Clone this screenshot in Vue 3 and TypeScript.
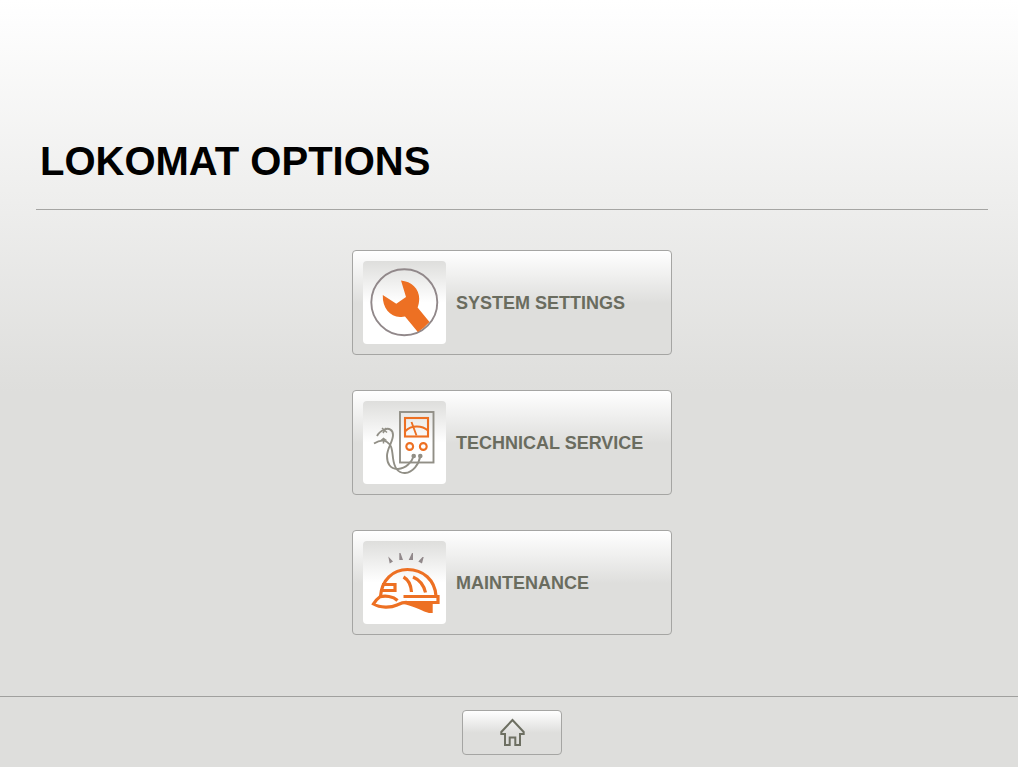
<script setup lang="ts">
interface Option {
  id: 'settings' | 'service' | 'maintenance'
  label: string
}

const options: Option[] = [
  { id: 'settings', label: 'SYSTEM SETTINGS' },
  { id: 'service', label: 'TECHNICAL SERVICE' },
  { id: 'maintenance', label: 'MAINTENANCE' },
]
</script>

<template>
  <div class="page">
    <header class="header">
      <h1 class="title">LOKOMAT OPTIONS</h1>
    </header>

    <main class="options">
      <button v-for="option in options" :key="option.id" type="button" class="option">
        <span class="tile">
          <svg v-if="option.id === 'settings'" viewBox="0 0 83 83" fill="none" aria-hidden="true">
            <circle cx="41.3" cy="41.3" r="33" stroke="#91888a" stroke-width="1.9" />
            <path
              d="M38 19.6C48.5 20.5 56.2 28 56.2 37.5C56.2 41 55.6 44 54.6 46.6L66.5 61Q61 67.2 54.8 71L42 55.6Q39.6 56.2 37 56C27 55.5 19.2 47 19.8 34L33.3 42.8L43 36Z"
              fill="#ed7023"
            />
          </svg>

          <svg v-else-if="option.id === 'service'" viewBox="0 0 83 83" fill="none" aria-hidden="true">
            <g stroke="#918f86" stroke-width="1.9">
              <rect x="37" y="11" width="33.5" height="50.5" />
              <path d="M50.7 55C49 61 43 67.5 35 68C27 68.5 24 62 24 55C24 47 30 41 30 34C30 29 26 26.5 21.5 28.5C18 30 15.5 32 14 35" />
              <path d="M57.3 55C56 63 50 71.5 42 72C34 72.4 31 65 30 57C29 49 29 44 24 41C20 38.5 15 40 11 42.5" />
              <path d="M19 27L24 31.5M23 27L20 32M20.5 37V42.5M18 39.5L20.5 37.5L23.5 39.5" stroke-width="1.5" />
            </g>
            <circle cx="50.7" cy="55" r="2.3" fill="#918f86" />
            <circle cx="57.3" cy="55" r="2.3" fill="#918f86" />
            <g stroke="#ed7023" stroke-width="2.1">
              <rect x="42" y="17" width="23" height="18.5" />
              <path d="M42.5 30C48 24 59 24 65 29.5M48.5 21L53.5 34.5" stroke-width="1.9" />
              <circle cx="46.7" cy="45.5" r="3.4" />
              <circle cx="60.3" cy="45.5" r="3.4" />
            </g>
          </svg>

          <svg v-else viewBox="0 0 83 83" fill="none" aria-hidden="true">
            <path
              d="M25.3 15.5L30 20.5L26.7 22.5ZM36.3 12L37.5 12L40 19H36.3ZM49 12H50V19H45.7ZM59.5 16H60.7L59 22.5L55.3 20.5Z"
              fill="#91888a"
            />
            <g stroke="#ed7023" stroke-width="3.2">
              <path d="M17.5 55.5C18.5 39 30 28.5 44.5 28.5C60 28.5 72 39 73 55" />
              <path d="M19 43.5H32V49.5H17.5" />
              <path d="M40.5 36C45 38.5 48 44 48.5 51M50 36C57 39 61 45 62.5 51.5" />
              <path d="M40.5 55.5H75V61.5H44C40 61.2 38 62.2 34 64C28 66.800 17 67 10.500 63C12.500 60 14.500 57.500 17 55.800C22 54.500 30 55 34.500 59.500" />
            </g>
            <path d="M41 61H69.700V72H66C60 70.500 53 66 41 63Z" fill="#ed7023" />
          </svg>
        </span>
        <span class="label">{{ option.label }}</span>
      </button>
    </main>

    <footer class="footer">
      <button type="button" class="home" aria-label="Home">
        <svg viewBox="0 0 28 30" fill="none" aria-hidden="true">
          <path
            d="M14.500 2L3.300 14V16H7V27H11.700V19.500H17.300V27H22V16H25.700V14Z"
            stroke="#6d6f62"
            stroke-width="2"
          />
        </svg>
      </button>
    </footer>
  </div>
</template>

<style>
body {
  margin: 0;
}
</style>

<style scoped>
.page {
  display: flex;
  flex-direction: column;
  box-sizing: border-box;
  min-height: 100vh;
  background: linear-gradient(#ffffff 0%, #dededc 51%, #dededc 100%);
  font-family: "Liberation Sans", Arial, sans-serif;
}

.header {
  margin: 0 30px 0 36px;
  padding: 137px 0 23px 4px;
  border-bottom: 1px solid #a5a5a3;
}

.title {
  margin: 0;
  font-size: 40px;
  line-height: 49px;
  font-weight: bold;
  color: #000;
}

.options {
  flex: 1;
  display: flex;
  flex-direction: column;
  align-items: center;
  gap: 35px;
  padding: 40px 0 32px 6px;
}

.option {
  display: flex;
  align-items: center;
  gap: 10px;
  box-sizing: border-box;
  width: 320px;
  height: 105px;
  padding: 0 10px;
  border: 1px solid #a5a5a3;
  border-radius: 4px;
  background: linear-gradient(#ffffff 0%, #dededc 51%, #dededc 100%);
  font-family: inherit;
  cursor: pointer;
}

.tile {
  flex: none;
  width: 83px;
  height: 83px;
  border-radius: 4px;
  background: linear-gradient(#dededc 0%, #ffffff 50%);
  overflow: hidden;
}

.tile svg {
  display: block;
  width: 100%;
  height: 100%;
}

.label {
  font-size: 18px;
  line-height: 22px;
  font-weight: bold;
  color: #6a6c5f;
  white-space: nowrap;
}

.footer {
  display: flex;
  justify-content: center;
  padding: 13px 0 12px 6px;
  border-top: 1px solid #a0a09e;
  background: #dededc;
}

.home {
  display: flex;
  align-items: center;
  justify-content: center;
  box-sizing: border-box;
  width: 100px;
  height: 45px;
  padding: 0;
  border: 1px solid #a5a5a3;
  border-radius: 4px;
  background: linear-gradient(#ffffff 0%, #dededc 51%, #dededc 100%);
  cursor: pointer;
}

.home svg {
  display: block;
  width: 28px;
  height: 30px;
}
</style>
